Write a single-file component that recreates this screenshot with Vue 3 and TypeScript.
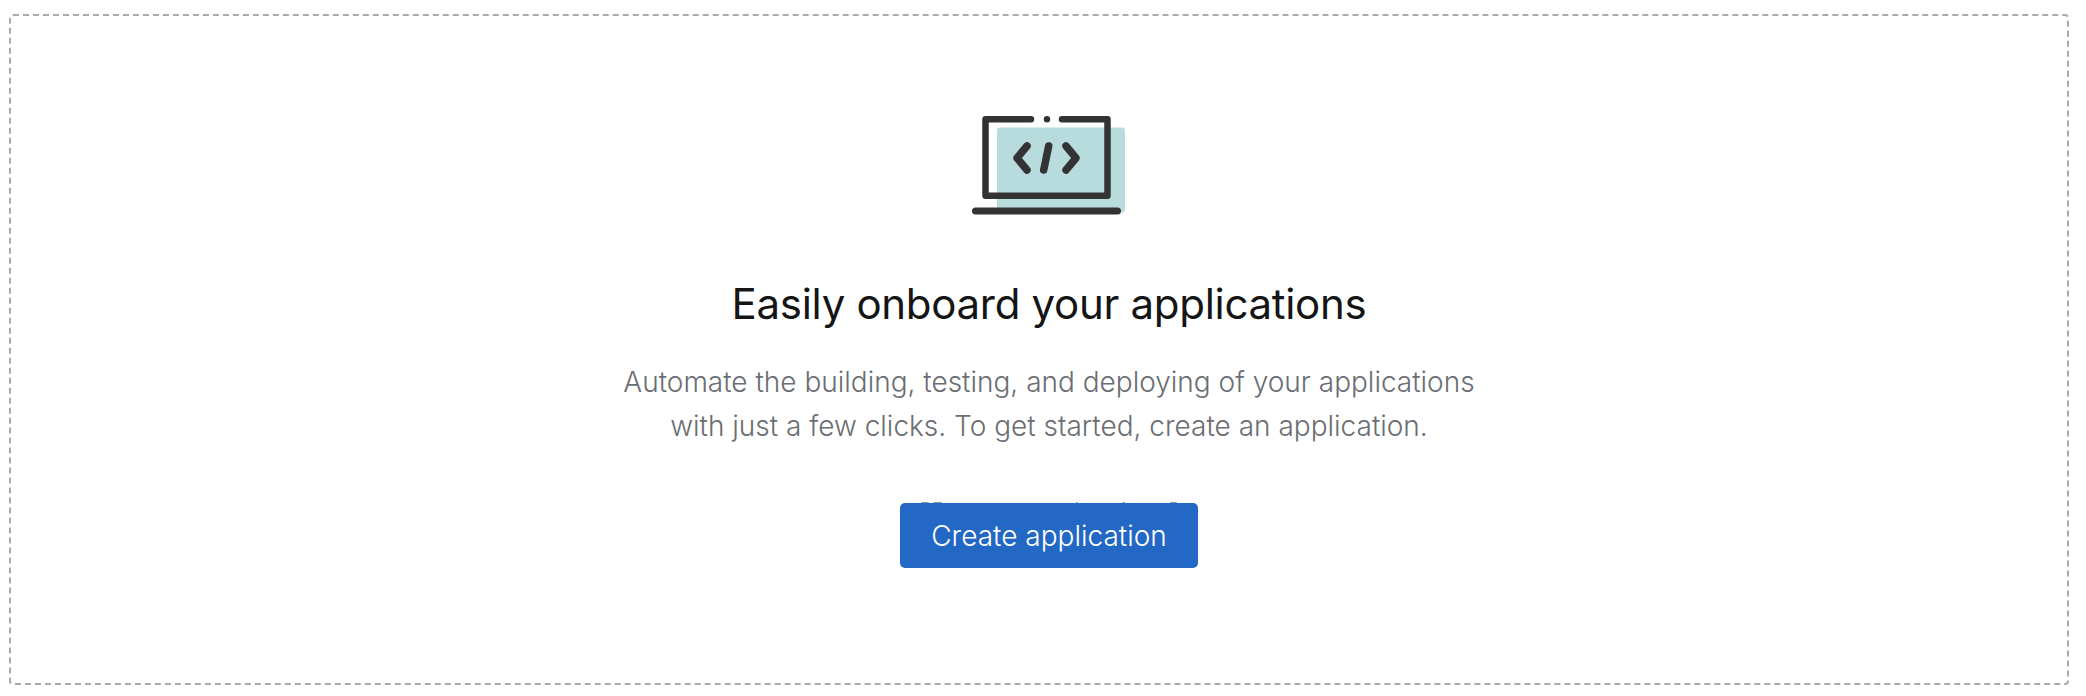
<script setup lang="ts">
const title = 'Easily onboard your applications'
const lines = [
  'Automate the building, testing, and deploying of your applications',
  'with just a few clicks. To get started, create an application.',
]
// x and width of the bits showing above the button's top edge
const peeks = [
  [21, 8],
  [33, 9],
  [176, 2],
  [222, 3],
  [270, 7],
]
</script>

<template>
  <main class="page">
    <section class="empty">
      <svg class="icon" width="160" height="104" viewBox="0 0 160 104" aria-hidden="true">
        <rect x="28" y="14.500" width="128" height="85" rx="3" fill="#b8dbdd" />
        <g fill="none" stroke="#333" stroke-width="6.5" stroke-linecap="round" stroke-linejoin="round">
          <path d="M62 6.200H16.500V82.800H138.500V6.200H93" />
          <path d="M6.500 98H148.500" stroke-width="7" />
          <g stroke-width="7.500">
            <path d="M58 33L48 45L58 57" />
            <path d="M97 33L107 45L97 57" />
            <path d="M79.700 33L74.700 57" />
          </g>
        </g>
        <circle cx="78" cy="6.200" r="3.200" fill="#333" />
      </svg>
      <h1 class="title">{{ title }}</h1>
      <p class="body">
        <span v-for="line in lines" :key="line" class="line">{{ line }}</span>
      </p>
      <div class="action">
        <svg class="peek" width="298" height="2" aria-hidden="true">
          <rect v-for="p in peeks" :key="p[0]" :x="p[0]" y="0" :width="p[1]" height="2" rx="1" fill="#8a93a3" />
        </svg>
        <button type="button" class="primary">Create application</button>
      </div>
    </section>
  </main>
</template>

<style scoped>
.page {
  padding: 14px 17px 11px 9px;
  font-family: Inter, "Liberation Sans", sans-serif;
}

.empty {
  height: 671px;
  box-sizing: border-box;
  display: flex;
  flex-direction: column;
  align-items: center;
  padding: 97px 0 0 20px;
  border: 2px dashed #aaa;
  border-radius: 4px;
}

.icon {
  display: block;
  margin-bottom: 60px;
}

.title {
  margin: 0 0 29px;
  font-size: 42px;
  line-height: 54px;
  font-weight: 400;
  letter-spacing: -0.3px;
  color: #151515;
}

.body {
  margin: 0 0 55px;
  text-align: center;
  font-size: 28px;
  line-height: 44px;
  font-weight: 300;
  color: #6a6e73;
}

.line {
  display: block;
}

.action {
  position: relative;
}

.peek {
  position: absolute;
  left: 0;
  top: -1px;
}

.primary {
  position: relative;
  display: block;
  width: 298px;
  height: 65px;
  border: 0;
  border-radius: 5px;
  background: #2368c4;
  color: #fff;
  font: inherit;
  font-size: 28px;
  font-weight: 300;
}
</style>
